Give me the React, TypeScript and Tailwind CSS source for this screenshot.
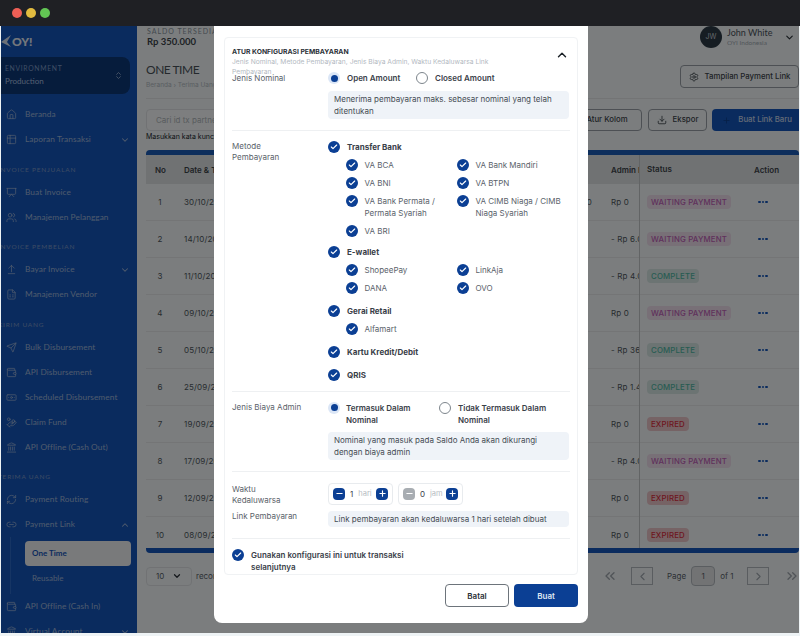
import type { ReactNode } from "react";
import {
  ArrowUpFromLine,
  Banknote,
  Check,
  ChevronDown,
  ChevronLeft,
  ChevronRight,
  ChevronUp,
  ChevronsLeft,
  ChevronsRight,
  ChevronsUpDown,
  Download,
  FileSpreadsheet,
  HandCoins,
  Home,
  Landmark,
  Link2,
  Minus,
  Plus,
  Presentation,
  RefreshCw,
  Send,
  Settings,
  Table2,
  Users,
  Wallet,
} from "lucide-react";

const sidebar = [
  { label: "Beranda", icon: Home },
  { label: "Laporan Transaksi", icon: Table2, caret: true },
  { section: "INVOICE PENJUALAN", h: "h-[28px]" },
  { label: "Buat Invoice", icon: Presentation },
  { label: "Manajemen Pelanggan", icon: Users },
  { section: "INVOICE PEMBELIAN", h: "h-[27px]" },
  { label: "Bayar Invoice", icon: ArrowUpFromLine, caret: true },
  { label: "Manajemen Vendor", icon: FileSpreadsheet },
  { section: "KIRIM UANG", h: "h-[28px]" },
  { label: "Bulk Disbursement", icon: Send },
  { label: "API Disbursement", icon: Wallet },
  { label: "Scheduled Disbursement", icon: Banknote },
  { label: "Claim Fund", icon: HandCoins },
  { label: "API Offline (Cash Out)", icon: Landmark },
  { section: "TERIMA UANG", h: "h-[27px]" },
  { label: "Payment Routing", icon: RefreshCw },
];

const rows = [
  { no: 1, date: "30/10/2023", amount: "Rp 100.000", admin: "Rp 0", status: "WAITING PAYMENT" },
  { no: 2, date: "14/10/2023", amount: "", admin: "- Rp 6.000", status: "WAITING PAYMENT" },
  { no: 3, date: "11/10/2023", amount: "", admin: "- Rp 4.000", status: "COMPLETE" },
  { no: 4, date: "09/10/2023", amount: "", admin: "Rp 0", status: "WAITING PAYMENT" },
  { no: 5, date: "05/10/2023", amount: "", admin: "- Rp 36.000", status: "COMPLETE" },
  { no: 6, date: "25/09/2023", amount: "", admin: "- Rp 1.400", status: "COMPLETE" },
  { no: 7, date: "19/09/2023", amount: "", admin: "Rp 0", status: "EXPIRED" },
  { no: 8, date: "17/09/2023", amount: "", admin: "- Rp 4.000", status: "WAITING PAYMENT" },
  { no: 9, date: "12/09/2023", amount: "", admin: "Rp 0", status: "EXPIRED" },
  { no: 10, date: "08/09/2023", amount: "", admin: "Rp 0", status: "EXPIRED" },
];

const badge: Record<string, string> = {
  "WAITING PAYMENT": "bg-[#f0e0ee] text-[#c060b8]",
  COMPLETE: "bg-[#d8e8e6] text-[#50b8a4]",
  EXPIRED: "bg-[#ecc6cb] text-[#dc2c40]",
};

const SideRow = ({ label, icon: Icon, caret }: { label: string; icon: typeof Home; caret?: boolean }) => (
  <div className="flex h-[25px] items-center pl-[5px] pr-[7px] text-[8.3px] tracking-[0.01em] text-[#9fb6da]">
    <Icon size={11} strokeWidth={1.6} className="shrink-0" />
    <span className="ml-[8px] flex-1 truncate">{label}</span>
    {caret && <ChevronDown size={10} strokeWidth={2.5} />}
  </div>
);

const SideLink = () => (
  <div className="flex h-[25px] items-center pl-[5px] pr-[7px] text-[8.3px] tracking-[0.01em] text-[#9fb6da]">
    <Link2 size={11} strokeWidth={1.6} />
    <span className="ml-[8px] flex-1">Payment Link</span>
    <ChevronUp size={10} strokeWidth={2.5} />
  </div>
);

const Sidebar = () => (
  <aside className="w-[136px] shrink-0 overflow-hidden bg-[#1557bd] font-['Lato',sans-serif]">
    <div className="flex h-[31px] items-center">
      <svg width="11" height="16" viewBox="0 0 11 16">
        <path d="M0 8 L10 1 L6 8 L10 13 Z" fill="#d8e2f0" />
      </svg>
      <span className="text-[12px] font-black text-[#e8eef7]">OY!</span>
    </div>
    <div className="flex h-[37px] w-[129px] items-center justify-between rounded-r-lg bg-[#0c3878] pl-[4px] pr-[7px]">
      <div>
        <div className="text-[6.8px] leading-[11px] tracking-[0.1em] text-[#7f9cc8]">ENVIRONMENT</div>
        <div className="text-[8px] leading-[14px] text-[#a9bfe0]">Production</div>
      </div>
      <ChevronsUpDown size={9} className="text-[#a9bfe0]" />
    </div>
    <div className="h-[8px]" />
    {sidebar.map((item) =>
      item.section ? (
        <div
          key={item.section}
          className={`-ml-[3px] flex items-end pb-[5px] text-[6.5px] leading-[10px] tracking-[0.12em] text-[#7a98c8] ${item.h}`}
        >
          {item.section}
        </div>
      ) : (
        <SideRow key={item.label} label={item.label!} icon={item.icon!} caret={item.caret} />
      ),
    )}
    <SideLink />
    <div className="ml-[9px] flex h-[57px] border-l border-[#2c6bc9] pl-[14px] pr-[6px] pt-[3.5px]">
      <div className="w-full">
        <div className="flex h-[25px] items-center rounded bg-[#f2f4f7] pl-[7px] text-[8px] font-bold text-[#1557bd]">One Time</div>
        <div className="flex h-[25px] items-center pl-[7px] text-[8px] text-[#9fb6da]">Reusable</div>
      </div>
    </div>
    <SideRow label="API Offline (Cash In)" icon={Wallet} />
    <SideRow label="Virtual Account" icon={Landmark} caret />
  </aside>
);

const TableHead = () => (
  <div className="flex h-[29px] items-center bg-[#e0e4e6] text-[8px] font-semibold text-[#3d444b]">
    <div className="w-[38px] pl-[9px]">No</div>
    <div className="w-[280px]">Date &amp; Time</div>
    <div className="w-[147px]">Amount</div>
    <div className="w-[28px] overflow-hidden whitespace-nowrap">Admin Fee</div>
    <div className="h-full w-[115px] border-l border-[#c4c8cb] pl-[7px] leading-[29px]">Status</div>
    <div>Action</div>
  </div>
);

const TableRow = ({ row }: { row: (typeof rows)[number] }) => (
  <div className="flex h-[37px] shrink-0 items-center border-b border-[#e8ebed] text-[8px] tracking-[0.02em] text-[#505860]">
    <div className="w-[38px] pr-[10px] text-center">{row.no}</div>
    <div className="w-[280px]">{row.date}</div>
    <div className="w-[147px] pr-[19px] text-right">{row.amount}</div>
    <div className="w-[28px] overflow-hidden whitespace-nowrap">{row.admin}</div>
    <div className="flex h-[37px] w-[115px] items-center border-l border-[#c4c8cb]">
      <span className={`ml-[7px] rounded px-[4px] py-[2px] text-[7.8px] font-medium leading-[10px] ${badge[row.status]}`}>
        {row.status}
      </span>
    </div>
    <div className="flex gap-[1px] pl-[4px]">
      <span className="h-[2.5px] w-[2.5px] rounded-full bg-[#1557bd]" />
      <span className="h-[2.5px] w-[2.5px] rounded-full bg-[#1557bd]" />
      <span className="h-[2.5px] w-[2.5px] rounded-full bg-[#1557bd]" />
    </div>
  </div>
);

const OutlineBtn = ({ children, className }: { children: ReactNode; className: string }) => (
  <div className={`flex items-center justify-center gap-[6px] whitespace-nowrap rounded-sm border border-[#9aa1a8] text-[7.8px] font-medium text-[#3d444b] ${className}`}>
    {children}
  </div>
);

const Main = () => (
  <main className="min-w-0 flex-1 overflow-hidden bg-[#f6fbfd] pl-[9px] font-['Inter',sans-serif]">
    <div className="flex h-[24px] justify-between">
      <div className="pl-[1px] font-['Lato',sans-serif]">
        <div className="text-[7px] leading-[10px] tracking-[0.14em] text-[#8a949e]">SALDO TERSEDIA</div>
        <div className="text-[9.5px] font-bold leading-[12px] text-[#3d444b]">Rp 350.000</div>
      </div>
      <div className="flex h-[22px] items-center">
        <span className="flex h-[22px] w-[22px] items-center justify-center rounded-full bg-[#2d3a46] text-[7px] text-[#c4ccd3]">JW</span>
        <div className="ml-[5px] w-[57px] font-['Lato',sans-serif]">
          <div className="text-[9px] leading-[11px] text-[#4b535b]">John White</div>
          <div className="text-[6.5px] leading-[9px] text-[#a5adb5]">OYI Indonesia</div>
        </div>
        <ChevronDown size={11} strokeWidth={2.5} className="mr-[4px] text-[#2b3138]" />
      </div>
    </div>
    <div className="flex h-[49px] items-start justify-between border-b border-[#e6e9eb]">
      <div>
        <div className="mt-[11px] font-['Lato',sans-serif] text-[12px] leading-[18px] tracking-[-0.04em] text-[#4b535b]">ONE TIME</div>
        <div className="mt-[1px] text-[6.5px] leading-[10px] text-[#b5bcc3]">Beranda  ›  Terima Uang  ›  Payment Link  ›  One Time</div>
      </div>
      <OutlineBtn className="mt-[15px] h-[23px] w-[119px]">
        <Settings size={10} />
        Tampilan Payment Link
      </OutlineBtn>
    </div>
    <div className="mt-[10px] flex h-[22px] items-center">
      <div className="flex h-full w-[300px] items-center rounded-sm border border-[#e2e5e8] bg-[#fbfdfe] pl-[9px] text-[8px] text-[#b0b7bd]">Cari id tx partner</div>
      <div className="flex-1" />
      <OutlineBtn className="h-full w-[70px]">Atur Kolom</OutlineBtn>
      <OutlineBtn className="ml-[6px] h-full w-[59px]">
        <Download size={10} />
        Ekspor
      </OutlineBtn>
      <div className="ml-[5px] flex h-full w-[87px] items-center justify-end gap-[7px] rounded-l-sm bg-[#1557bd] pr-[7px] text-[7.8px] font-medium text-[#c9d8ee]">
        <Plus size={9} className="text-[#0e3f8e]" />
        Buat Link Baru
      </div>
    </div>
    <div className="h-[12px] text-[7px] leading-[12px] text-[#20262c]">Masukkan kata kunci dan tekan enter</div>
    <div className="mt-[7px]">
      <div className="h-[5px] rounded-t bg-[#1a5cb8]" />
      <TableHead />
      <div className="flex h-[364px] flex-col overflow-hidden">
        {rows.map((row) => (
          <TableRow key={row.no} row={row} />
        ))}
      </div>
      <div className="h-[5px] rounded-b bg-[#1557bd]" />
    </div>
    <div className="mt-[13px] flex h-[20px] items-center whitespace-nowrap text-[8px] text-[#5a626a]">
      <div className="flex h-[19px] w-[46px] shrink-0 items-center justify-between rounded-sm border border-[#e2e5e8] px-[9px]">
        10
        <ChevronDown size={10} strokeWidth={3} className="text-[#2b3138]" />
      </div>
      <span className="ml-[4px] w-[406px] shrink-0">records per page</span>
      <ChevronsLeft size={16} className="shrink-0 text-[#a2a9b0]" />
      <div className="ml-[13px] flex h-[18px] w-[22px] shrink-0 items-center justify-center border border-[#b5bbc1]">
        <ChevronLeft size={13} className="text-[#a2a9b0]" />
      </div>
      <span className="ml-[14px] shrink-0">Page</span>
      <div className="ml-[5px] flex h-[20px] w-[24px] shrink-0 items-center justify-center rounded-sm border border-[#b5bbc1] bg-[#e4e7e9]">1</div>
      <span className="ml-[5px] shrink-0">of 1</span>
      <div className="ml-[14px] flex h-[18px] w-[22px] shrink-0 items-center justify-center border border-[#b5bbc1]">
        <ChevronRight size={13} className="text-[#a2a9b0]" />
      </div>
      <ChevronsRight size={16} className="ml-[15px] shrink-0 text-[#a2a9b0]" />
    </div>
  </main>
);

const Tick = () => (
  <span className="flex h-3 w-3 shrink-0 items-center justify-center rounded-full bg-[#0b3f94]">
    <Check size={8} strokeWidth={3.5} className="text-white" />
  </span>
);

const Radio = ({ on }: { on?: boolean }) =>
  on ? (
    <span className="flex h-3 w-3 shrink-0 items-center justify-center rounded-full bg-[#dbe6f6]">
      <span className="h-[7px] w-[7px] rounded-full bg-[#0b3f94]" />
    </span>
  ) : (
    <span className="h-3 w-3 shrink-0 rounded-full border border-[#7d858c] bg-white" />
  );

const Info = ({ children }: { children: ReactNode }) => (
  <div className="w-[241px] rounded-sm bg-[#eff3f8] px-[6px] py-[2px] text-[8px] leading-[12px] text-[#454c54]">{children}</div>
);

const Label = ({ children, className = "" }: { children: ReactNode; className?: string }) => (
  <div className={`w-[96px] shrink-0 text-[8px] leading-[11.5px] text-[#5a626a] ${className}`}>{children}</div>
);

const Group = ({ title }: { title: string }) => (
  <div className="flex h-3 items-center gap-[7px] text-[8px] font-bold text-[#3a4149]">
    <Tick />
    {title}
  </div>
);

const Sub = ({ children }: { children: ReactNode }) => (
  <div className="flex items-start gap-[6.5px] text-[8px] leading-[12px] text-[#5a626a]">
    <Tick />
    <span>{children}</span>
  </div>
);

const SubGrid = ({ children }: { children: ReactNode }) => (
  <div className="mt-[6px] grid grid-cols-[111px_112px] gap-y-[6px] pl-[18px]">{children}</div>
);

const Stepper = ({ value, unit, off }: { value: string; unit: string; off?: boolean }) => (
  <div className="flex h-[22px] w-[65px] items-center rounded-sm border border-[#e8ebee] px-[4px] text-[8px]">
    <span className={`flex h-3 w-3 items-center justify-center rounded-sm ${off ? "bg-[#a8adb2]" : "bg-[#0b3f94]"}`}>
      <Minus size={9} strokeWidth={3} className="text-white" />
    </span>
    <span className="ml-[5px] text-[#3a4149]">{value}</span>
    <span className="ml-[5px] flex-1 text-[7.5px] text-[#b6bcc2]">{unit}</span>
    <span className="flex h-3 w-3 items-center justify-center rounded-sm bg-[#0b3f94]">
      <Plus size={9} strokeWidth={3} className="text-white" />
    </span>
  </div>
);

const Modal = () => (
  <div className="absolute left-[214px] top-[26px] flex h-[597px] w-[374px] flex-col rounded-b-lg bg-white px-[10px] pt-[11px] font-['Inter',sans-serif]">
    <div className="h-[538px] overflow-hidden rounded border border-[#f0f2f4] px-[7px]">
      <div className="relative pt-[8px]">
        <div className="text-[6.8px] font-bold leading-[11px] text-[#2b3138]">ATUR KONFIGURASI PEMBAYARAN</div>
        <div className="w-[270px] text-[6.7px] leading-[10px] text-[#b3b9bf]">
          Jenis Nominal, Metode Pembayaran, Jenis Biaya Admin, Waktu Kedaluwarsa Link Pembayaran
        </div>
        <ChevronUp size={14} strokeWidth={2.5} className="absolute right-[1px] top-[10px] text-[#1f252b]" />
      </div>
      <div className="-mt-[5.5px] flex border-b border-[#eef0f2] pb-[11px]">
        <Label className="pt-[1px]">Jenis Nominal</Label>
        <div>
          <div className="flex h-[13px] items-center text-[8px] font-semibold text-[#3a4149]">
            <Radio on />
            <span className="ml-[7px] w-[69px]">Open Amount</span>
            <Radio />
            <span className="ml-[7px]">Closed Amount</span>
          </div>
          <div className="mt-[6px]">
            <Info>Menerima pembayaran maks. sebesar nominal yang telah ditentukan</Info>
          </div>
        </div>
      </div>
      <div className="flex border-b border-[#eef0f2] pb-[10px] pt-[10px]">
        <Label>
          Metode
          <br />
          Pembayaran
        </Label>
        <div>
          <Group title="Transfer Bank" />
          <SubGrid>
            <Sub>VA BCA</Sub>
            <Sub>VA Bank Mandiri</Sub>
            <Sub>VA BNI</Sub>
            <Sub>VA BTPN</Sub>
            <Sub>VA Bank Permata / Permata Syariah</Sub>
            <Sub>VA CIMB Niaga / CIMB Niaga Syariah</Sub>
            <Sub>VA BRI</Sub>
          </SubGrid>
          <div className="mt-[9px]"><Group title="E-wallet" /></div>
          <SubGrid>
            <Sub>ShopeePay</Sub>
            <Sub>LinkAja</Sub>
            <Sub>DANA</Sub>
            <Sub>OVO</Sub>
          </SubGrid>
          <div className="mt-[11px]"><Group title="Gerai Retail" /></div>
          <SubGrid>
            <Sub>Alfamart</Sub>
          </SubGrid>
          <div className="mt-[11px]"><Group title="Kartu Kredit/Debit" /></div>
          <div className="mt-[11px]"><Group title="QRIS" /></div>
        </div>
      </div>
      <div className="flex border-b border-[#eef0f2] pb-[11px] pt-[10px]">
        <Label className="pt-[0.5px]">Jenis Biaya Admin</Label>
        <div>
          <div className="flex text-[8px] font-semibold leading-[12px] text-[#3a4149]">
            <Radio on />
            <span className="ml-[6px] w-[93px]">Termasuk Dalam Nominal</span>
            <Radio />
            <span className="ml-[7px] w-[100px]">Tidak Termasuk Dalam Nominal</span>
          </div>
          <div className="mt-[6px]">
            <Info>Nominal yang masuk pada Saldo Anda akan dikurangi dengan biaya admin</Info>
          </div>
        </div>
      </div>
      <div className="border-b border-[#eef0f2] pb-[11px] pt-[11px]">
        <div className="flex h-[22px]">
          <Label className="pt-[1px]">
            Waktu
            <br />
            Kedaluwarsa
          </Label>
          <div className="flex gap-[5px]">
            <Stepper value="1" unit="hari" />
            <Stepper value="0" unit="jam" off />
          </div>
        </div>
        <div className="mt-[6px] flex">
          <Label className="pt-[0.5px]">Link Pembayaran</Label>
          <Info>Link pembayaran akan kedaluwarsa 1 hari setelah dibuat</Info>
        </div>
      </div>
      <div className="mt-[10px] flex items-start gap-[7px] text-[8px] font-semibold leading-[12px] text-[#3a4149]">
        <Tick />
        <span className="w-[170px]">Gunakan konfigurasi ini untuk transaksi selanjutnya</span>
      </div>
    </div>
    <div className="mt-[9px] flex justify-end gap-[5px]">
      <div className="flex h-[23px] w-[64px] items-center justify-center rounded-sm border border-[#6d747b] text-[8px] font-semibold text-[#2b3138]">Batal</div>
      <div className="flex h-[23px] w-[64px] items-center justify-center rounded-sm bg-[#0b3f94] text-[8px] font-semibold text-[#dfe7f3]">Buat</div>
    </div>
  </div>
);

export default function App() {
  return (
    <div className="relative h-[636px] w-[800px] overflow-hidden bg-[#eef3f5]">
      <div className="flex h-[26px] items-center gap-[4px] bg-[#1f2024] pl-[12px]">
        <span className="h-[10px] w-[10px] rounded-full bg-[#ee5f56]" />
        <span className="h-[10px] w-[10px] rounded-full bg-[#e2bb3f]" />
        <span className="h-[10px] w-[10px] rounded-full bg-[#62c554]" />
      </div>
      <div className="relative mx-px flex h-[607px] overflow-hidden">
        <Sidebar />
        <Main />
        <div className="absolute inset-0 bg-black/50 backdrop-blur-[0.6px]" />
      </div>
      <Modal />
    </div>
  );
}
